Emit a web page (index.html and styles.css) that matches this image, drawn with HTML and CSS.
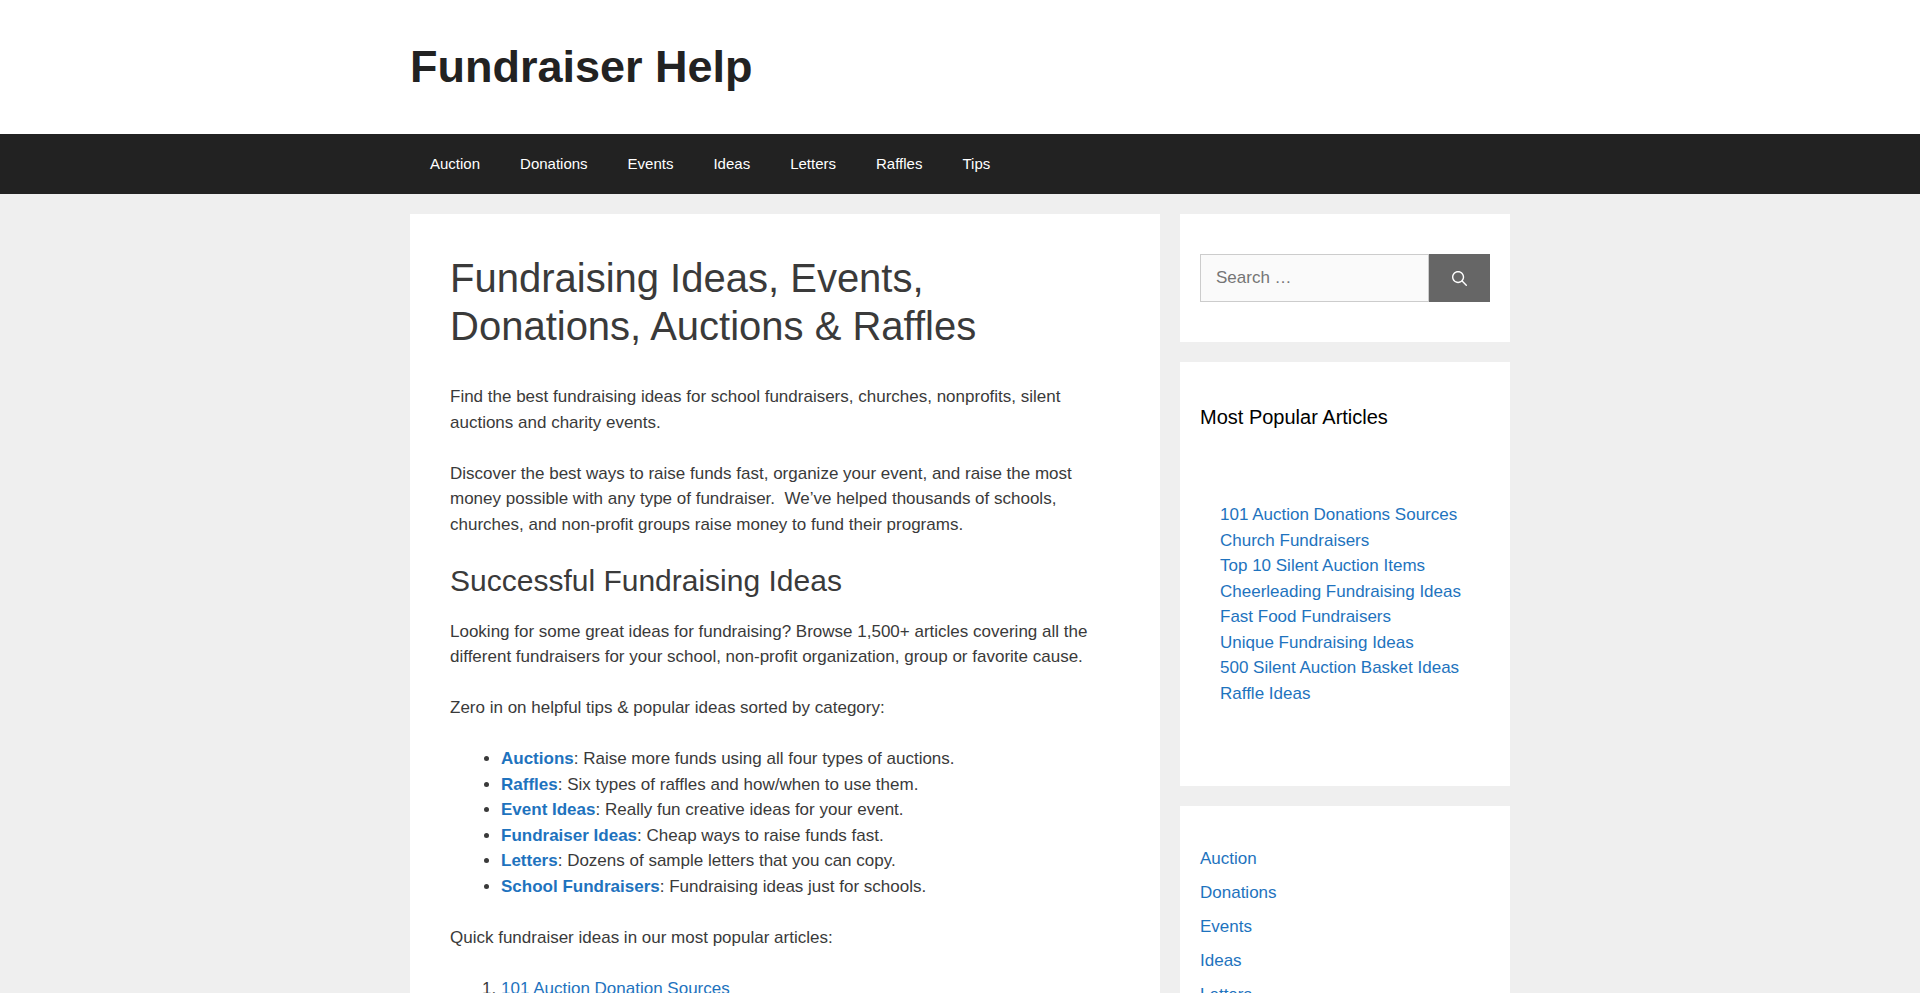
FILE: index.html
```
<!DOCTYPE html>
<html lang="en">
<head>
    <meta charset="UTF-8">
    <meta name="viewport" content="width=device-width, initial-scale=1">
    <title>Fundraiser Help</title>
    <link rel="stylesheet" href="styles.css">
</head>
<body>
    <header class="site-header">
        <div class="container">
            <p class="site-title"><a href="#">Fundraiser Help</a></p>
        </div>
    </header>

    <nav class="main-navigation" aria-label="Primary">
        <ul class="container menu">
            <li><a href="#">Auction</a></li>
            <li><a href="#">Donations</a></li>
            <li><a href="#">Events</a></li>
            <li><a href="#">Ideas</a></li>
            <li><a href="#">Letters</a></li>
            <li><a href="#">Raffles</a></li>
            <li><a href="#">Tips</a></li>
        </ul>
    </nav>

    <div class="container site-content">
        <main class="content-area">
            <h1>Fundraising Ideas, Events, Donations, Auctions &amp; Raffles</h1>

            <div class="entry-content">
                <p>Find the best fundraising ideas for school fundraisers, churches, nonprofits, silent auctions and charity events.</p>
                <p>Discover the best ways to raise funds fast, organize your event, and raise the most money possible with any type of fundraiser.&nbsp; We’ve helped thousands of schools, churches, and non-profit groups raise money to fund their programs.</p>

                <h2>Successful Fundraising Ideas</h2>
                <p>Looking for some great ideas for fundraising? Browse 1,500+ articles covering all the different fundraisers for your school, non-profit organization, group or favorite cause.</p>
                <p>Zero in on helpful tips &amp; popular ideas sorted by category:</p>
                <ul>
                    <li><a href="#"><strong>Auctions</strong></a>: Raise more funds using all four types of auctions.</li>
                    <li><a href="#"><strong>Raffles</strong></a>: Six types of raffles and how/when to use them.</li>
                    <li><a href="#"><strong>Event Ideas</strong></a>: Really fun creative ideas for your event.</li>
                    <li><a href="#"><strong>Fundraiser Ideas</strong></a>: Cheap ways to raise funds fast.</li>
                    <li><a href="#"><strong>Letters</strong></a>: Dozens of sample letters that you can copy.</li>
                    <li><a href="#"><strong>School Fundraisers</strong></a>: Fundraising ideas just for schools.</li>
                </ul>
                <p>Quick fundraiser ideas in our most popular articles:</p>
                <ol>
                    <li><a href="#">101 Auction Donation Sources</a></li>
                </ol>
            </div>
        </main>

        <aside class="sidebar">
            <section class="widget">
                <form class="search-form" role="search">
                    <input type="search" class="search-field" placeholder="Search …" aria-label="Search for:">
                    <button type="submit" class="search-submit" aria-label="Search">
                        <svg viewBox="0 0 512 512" width="15" height="15" aria-hidden="true">
                            <path fill="currentColor" fill-rule="evenodd" clip-rule="evenodd" d="M208 48c-88.366 0-160 71.634-160 160s71.634 160 160 160 160-71.634 160-160S296.366 48 208 48zM0 208C0 93.125 93.125 0 208 0s208 93.125 208 208c0 48.741-16.765 93.566-44.843 129.024l133.826 134.018c9.366 9.379 9.355 24.575-.025 33.941-9.379 9.366-24.575 9.355-33.941-.025L337.238 370.987C301.747 399.167 256.839 416 208 416 93.125 416 0 322.875 0 208z"/>
                        </svg>
                    </button>
                </form>
            </section>

            <section class="widget">
                <h2 class="widget-title">Most Popular Articles</h2>
                <ul class="popular-list">
                    <li><a href="#">101 Auction Donations Sources</a></li>
                    <li><a href="#">Church Fundraisers</a></li>
                    <li><a href="#">Top 10 Silent Auction Items</a></li>
                    <li><a href="#">Cheerleading Fundraising Ideas</a></li>
                    <li><a href="#">Fast Food Fundraisers</a></li>
                    <li><a href="#">Unique Fundraising Ideas</a></li>
                    <li><a href="#">500 Silent Auction Basket Ideas</a></li>
                    <li><a href="#">Raffle Ideas</a></li>
                </ul>
            </section>

            <section class="widget">
                <ul class="category-list">
                    <li><a href="#">Auction</a></li>
                    <li><a href="#">Donations</a></li>
                    <li><a href="#">Events</a></li>
                    <li><a href="#">Ideas</a></li>
                    <li><a href="#">Letters</a></li>
                </ul>
            </section>
        </aside>
    </div>
</body>
</html>
```
FILE: styles.css
```
/* General Styles */
* {
    box-sizing: border-box;
}

body {
    margin: 0;
    background: #efefef;
    color: #3a3a3a;
    font-family: "Liberation Sans", Arial, sans-serif;
    font-size: 17px;
    line-height: 1.5;
}

h1, h2, p, ul, ol {
    margin: 0;
    padding: 0;
}

h1, h2 {
    font-weight: 400;
    line-height: 1.2;
}

a {
    color: #1e73be;
    text-decoration: none;
}

a:hover {
    color: #000;
}

.container {
    max-width: 1100px;
    margin: 0 auto;
}

/* Header */
.site-header {
    background: #fff;
    padding: 40px 0;
}

.site-title {
    font-size: 45px;
    font-weight: 700;
    line-height: 1.2;
}

.site-title a {
    color: #222;
}

/* Navigation */
.main-navigation {
    background: #222;
}

.menu {
    display: flex;
    flex-wrap: wrap;
    list-style: none;
}

.menu a {
    display: block;
    padding: 0 20px;
    color: #fff;
    font-size: 15px;
    line-height: 60px;
}

.menu a:hover {
    background: #3f3f3f;
}

/* Columns */
.site-content {
    display: flex;
    gap: 20px;
    padding: 20px 0;
}

.content-area {
    flex: 1;
    padding: 40px;
    background: #fff;
}

.sidebar {
    width: 30%;
    display: flex;
    flex-direction: column;
    gap: 20px;
}

/* Article */
.content-area h1 {
    font-size: 40px;
}

.entry-content {
    margin-top: 2em;
}

.entry-content p {
    margin-bottom: 1.5em;
}

.entry-content h2 {
    margin-bottom: 20px;
    font-size: 30px;
}

.entry-content ul,
.entry-content ol {
    margin: 0 0 1.5em 3em;
}

/* Widgets */
.widget {
    padding: 40px 20px;
    background: #fff;
}

.widget-title {
    margin-bottom: 30px;
    color: #000;
    font-size: 20px;
    line-height: 1.5;
}

.widget ul {
    list-style: none;
}

.popular-list {
    padding: 40px 20px;
}

.category-list li {
    margin-bottom: 0.5em;
}

.search-form {
    display: flex;
    height: 48px;
}

.search-field {
    flex: 1;
    min-width: 0;
    padding: 10px 15px;
    border: 1px solid #ccc;
    border-radius: 0;
    background: #fafafa;
    color: #666;
    font: inherit;
    -webkit-appearance: none;
    appearance: none;
}

.search-submit {
    display: flex;
    align-items: center;
    padding: 0 23px;
    border: 0;
    background: #666;
    color: #fff;
    cursor: pointer;
}

.search-submit:hover {
    background: #3f3f3f;
}

@media (max-width: 768px) {
    .site-content {
        flex-direction: column;
    }

    .sidebar {
        width: 100%;
    }
}
```
